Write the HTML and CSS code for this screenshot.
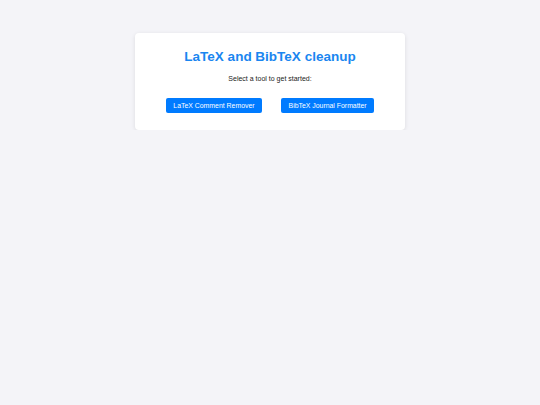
FILE: index.html
```html
<!DOCTYPE html>
<html>
<head>
<meta charset="utf-8">
<link rel="stylesheet" href="styles.css">
</head>
<body>
<div class="card">
  <h1 class="title">LaTeX and BibTeX cleanup</h1>
  <p class="sub">Select a tool to get started:</p>
  <div class="buttons">
    <button class="btn">LaTeX Comment Remover</button>
    <button class="btn">BibTeX Journal Formatter</button>
  </div>
</div>
</body>
</html>
```
FILE: styles.css
```css
html, body {
  margin: 0;
  padding: 0;
  background: #f4f4f8;
  font-family: "Liberation Sans", Arial, sans-serif;
}
body {
  display: flex;
  justify-content: center;
  padding-top: 33px;
}
.card {
  width: 270px;
  box-sizing: border-box;
  background: #fff;
  border-radius: 4px;
  box-shadow: 0 1px 4px rgba(0,0,0,0.1);
  padding: 15px 0 17px;
  text-align: center;
}
.title {
  margin: 0;
  font-size: 13.5px;
  font-weight: bold;
  color: #1a86f0;
  line-height: 18px;
}
.sub {
  margin: 8px 0 0;
  font-size: 7px;
  color: #222;
  line-height: 9px;
}
.buttons {
  display: flex;
  justify-content: center;
  gap: 19px;
  margin-top: 15px;
}
.btn {
  font-family: inherit;
  font-size: 6.9px;
  color: #fff;
  background: #007bff;
  border: none;
  border-radius: 2px;
  height: 15px;
  padding: 0 7.5px;
}
```
